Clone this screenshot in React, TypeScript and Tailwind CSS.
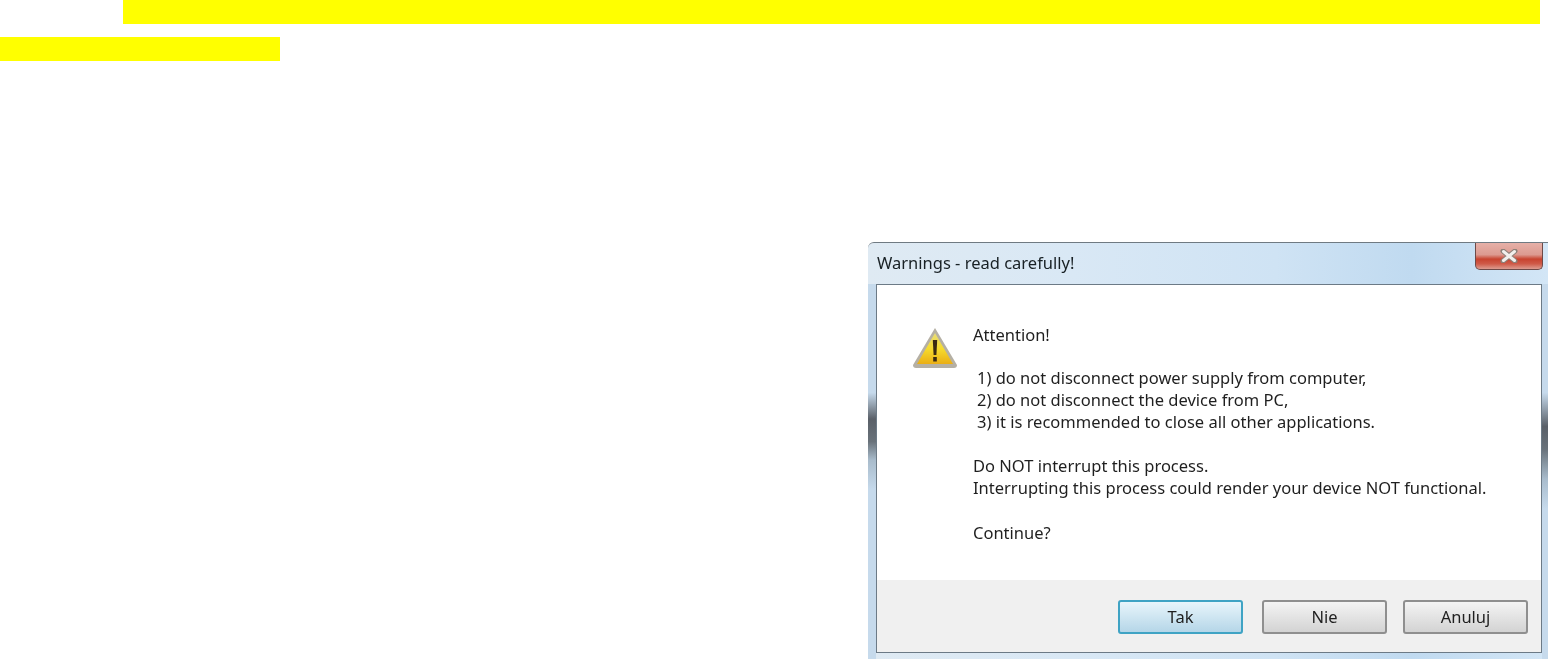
import React from "react";

const lines = [
  "1) do not disconnect power supply from computer,",
  "2) do not disconnect the device from PC,",
  "3) it is recommended to close all other applications.",
];

function WarningIcon() {
  return (
    <svg width="46" height="42" viewBox="0 0 46 42" className="shrink-0 blur-[0.5px]">
      <defs>
        <linearGradient id="warn" x1="0" y1="0" x2="0" y2="1">
          <stop offset="0" stopColor="#e8dc7a" />
          <stop offset="0.5" stopColor="#f6dc2e" />
          <stop offset="1" stopColor="#eaae14" />
        </linearGradient>
      </defs>
      <path d="M23 1 L45 38 Q45 41 42 41 L4 41 Q1 41 1 38 Z" fill="#b5b0a4" />
      <path d="M23 6 L41 37 L5 37 Z" fill="url(#warn)" />
      <path d="M20.8 13 H25.2 L24.4 28 H21.6 Z" fill="#3a2a12" />
      <rect x="21.2" y="30" width="3.6" height="4.5" fill="#3a2a12" />
    </svg>
  );
}

function DialogButton({ label, primary }: { label: string; primary?: boolean }) {
  return (
    <button
      className={
        primary
          ? "w-[125px] h-[34px] rounded-[3px] border-2 border-[#3fa3c4] bg-gradient-to-b from-[#e8f5fb] to-[#b5d6e8] text-[16.5px] text-[#1f1f1f] blur-[0.4px]"
          : "w-[125px] h-[34px] rounded-[3px] border-2 border-[#8f8f8f] bg-gradient-to-b from-[#f4f4f4] to-[#d3d3d3] text-[16.5px] text-[#1f1f1f] blur-[0.4px]"
      }
    >
      {label}
    </button>
  );
}

export default function App() {
  return (
    <div className="w-[1548px] h-[659px] overflow-hidden bg-white font-['Noto_Sans',sans-serif]">
      <div className="ml-[123px] w-[1417px] h-[24px] bg-[#ffff00]" />
      <div className="mt-[13px] w-[280px] h-[24px] bg-[#ffff00]" />

      <div className="mt-[181px] ml-[868px] w-[680px] h-[417px] flex flex-col rounded-tl-[6px] overflow-hidden bg-[linear-gradient(to_right,#dfeaf3_0%,#d9e8f5_30%,#cfe3f4_60%,#c0daf0_80%,#d3e6f6_100%)] border-t border-[#6f7a82]">
        <div className="h-[41px] flex justify-between items-start pl-[9px] pr-[5px]">
          <span className="mt-[8px] text-[16.5px] text-[#182024] blur-[0.4px]">Warnings - read carefully!</span>
          <div className="w-[68px] h-[27px] flex items-center justify-center rounded-b-[5px] border border-t-0 border-[#6e4a48] bg-[linear-gradient(to_bottom,#e6b0a8_0%,#dc9a90_45%,#c8432f_62%,#cf5a48_80%,#dd9c90_100%)]">
            <svg width="18" height="14" viewBox="0 0 18 14" className="blur-[0.4px]">
              <path d="M3 2 L15 12 M15 2 L3 12" stroke="#8d8078" strokeWidth="5" strokeLinecap="round" />
              <path d="M3.5 2.5 L14.5 11.5 M14.5 2.5 L3.5 11.5" stroke="#f2efec" strokeWidth="3" strokeLinecap="round" />
            </svg>
          </div>
        </div>

        <div className="flex flex-1">
          <div className="w-[8px] bg-[linear-gradient(to_bottom,#c6daec_0%,#c6daec_29%,#5a6068_36%,#69727a_42%,#a9bccc_47%,#c6daec_55%,#c6daec_100%)]" />
          <div className="w-[666px] h-[369px] flex flex-col bg-white border border-[#6c7a86]">
            <div className="flex-1 flex pl-[35px] pt-[26px] text-[16.5px] leading-[22px] text-[#1f1f1f]">
              <div className="mt-[16px]">
                <WarningIcon />
              </div>
              <div className="ml-[15px] blur-[0.4px]">
                <p className="mt-[13px]">Attention!</p>
                <div className="mt-[21px] pl-[4px]">
                  {lines.map((line) => (
                    <p key={line}>{line}</p>
                  ))}
                </div>
                <p className="mt-[22px]">Do NOT interrupt this process.</p>
                <p>Interrupting this process could render your device NOT functional.</p>
                <p className="mt-[23px]">Continue?</p>
              </div>
            </div>
            <div className="h-[72px] flex items-start justify-end pt-[20px] pr-[13px] bg-[#f0f0f0]">
              <DialogButton label="Tak" primary />
              <div className="ml-[19px]">
                <DialogButton label="Nie" />
              </div>
              <div className="ml-[16px]">
                <DialogButton label="Anuluj" />
              </div>
            </div>
          </div>
          <div className="w-[6px] bg-[linear-gradient(to_bottom,#c6daec_0%,#c6daec_29%,#5a6068_38%,#69727a_44%,#a9bccc_52%,#c6daec_60%,#c6daec_100%)]" />
        </div>
      </div>
    </div>
  );
}
